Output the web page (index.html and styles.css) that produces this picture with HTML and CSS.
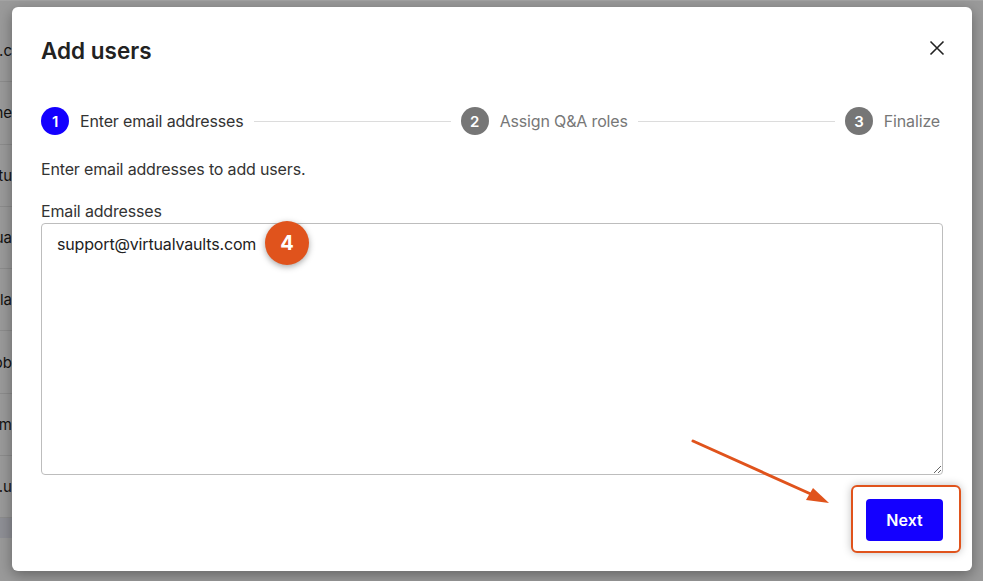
FILE: index.html
```html
<!DOCTYPE html>
<html lang="en">

<head>
    <meta charset="utf-8">
    <meta name="viewport" content="width=device-width, initial-scale=1.0">
    <title>Add users</title>
    <link rel="stylesheet" href="styles.css">
</head>

<body>
    <div id="baggrund">
        <div class="raekke"><span>.c</span></div>
        <div class="raekke"><span>ne</span></div>
        <div class="raekke"><span>tu</span></div>
        <div class="raekke"><span>ua</span></div>
        <div class="raekke"><span>la</span></div>
        <div class="raekke"><span>ob</span></div>
        <div class="raekke"><span>m</span></div>
        <div class="raekke"><span>.u</span></div>
        <div class="bund"></div>
    </div>

    <div id="modal">
        <header class="top">
            <h1>Add users</h1>
            <button class="luk" aria-label="Close">
                <svg width="16" height="16" viewBox="0 0 16 16">
                    <path d="M1.5 1.5 L14.5 14.5 M14.5 1.5 L1.5 14.5" stroke="#222" stroke-width="1.6" fill="none" />
                </svg>
            </button>
        </header>

        <nav class="trin">
            <div class="step aktiv"><span class="nr">1</span><span class="navn">Enter email addresses</span></div>
            <div class="streg"></div>
            <div class="step"><span class="nr">2</span><span class="navn">Assign Q&amp;A roles</span></div>
            <div class="streg"></div>
            <div class="step"><span class="nr">3</span><span class="navn">Finalize</span></div>
        </nav>

        <p class="intro">Enter email addresses to add users.</p>

        <label class="felt">
            <span>Email addresses</span>
            <textarea>support@virtualvaults.com</textarea>
        </label>

        <footer class="knapper">
            <div class="markering"></div>
            <button class="next">Next</button>
        </footer>

        <div class="badge">4</div>

        <svg class="pil" width="160" height="80" viewBox="0 0 160 80">
            <line x1="8" y1="8" x2="128" y2="62" stroke="#e0531c" stroke-width="3" stroke-linecap="round" />
            <polygon points="144,70 121,67 128,55" fill="#e0531c" />
        </svg>
    </div>
</body>

</html>
```

FILE: styles.css
```css
html,
body,
* {
    margin: 0;
    padding: 0;
    box-sizing: border-box;
}

body {
    width: 983px;
    height: 581px;
    overflow: hidden;
    background-color: #9a9a9a;
    font-family: Inter, "Liberation Sans", sans-serif;
    color: #333;
}

#baggrund {
    padding-top: 19px;
    border-top: 1px solid #a3a3a3;
}

.raekke {
    height: 62.3px;
    border-bottom: 1px solid #8c8c8c;
    display: flex;
    align-items: center;
    justify-content: flex-end;
    width: 12px;
    overflow: hidden;
    font-size: 15px;
    color: #111;
    white-space: nowrap;
}

.bund {
    height: 20px;
    width: 12px;
    background-color: #8e8f95;
}

#modal {
    position: absolute;
    left: 12px;
    top: 7px;
    width: 960px;
    height: 564px;
    background-color: white;
    border-radius: 6px;
    box-shadow: 0 4px 14px rgba(0, 0, 0, 0.35);
    padding: 29px 29px 30px 29px;
    display: flex;
    flex-direction: column;
    letter-spacing: -0.01em;
}

.top {
    display: flex;
    justify-content: space-between;
    align-items: center;
    height: 28px;
}

h1 {
    font-size: 22.5px;
    font-weight: 600;
    color: #222;
    line-height: 28px;
    margin-top: 2px;
    letter-spacing: 0;
}

.luk {
    background: none;
    border: none;
    width: 16px;
    height: 16px;
    margin-right: -2px;
    margin-top: -4px;
}

.trin {
    display: flex;
    align-items: center;
    margin-top: 43px;
    height: 28px;
    padding-right: 3px;
}

.step {
    display: flex;
    align-items: center;
    gap: 11px;
    color: #777;
    font-size: 16px;
}

.nr {
    width: 28px;
    height: 28px;
    border-radius: 50%;
    background-color: #767676;
    color: white;
    font-size: 15px;
    font-weight: 600;
    display: flex;
    align-items: center;
    justify-content: center;
}

.aktiv {
    color: #333;
}

.aktiv .nr {
    background-color: #1400ff;
}

.streg {
    flex: 1;
    height: 1px;
    background-color: #dcdcdc;
    margin: 0 10px;
}

.intro {
    margin-top: 22px;
    font-size: 16px;
    line-height: 24px;
}

.felt {
    margin-top: 18px;
    display: flex;
    flex-direction: column;
    font-size: 16px;
    line-height: 24px;
}

textarea {
    height: 252px;
    border: 1px solid #bdbdbd;
    border-radius: 4px;
    padding: 8px 15px;
    font-family: Inter, "Liberation Sans", sans-serif;
    font-size: 16px;
    line-height: 24px;
    letter-spacing: -0.01em;
    color: #222;
    resize: vertical;
    outline: none;
}

.knapper {
    margin-top: 24px;
    display: flex;
    justify-content: flex-end;
    position: relative;
}

.next {
    width: 77px;
    height: 42px;
    background-color: #1400ff;
    color: white;
    border: none;
    border-radius: 4px;
    font-family: Inter, "Liberation Sans", sans-serif;
    font-size: 16px;
    font-weight: 600;
    position: relative;
}

.markering {
    position: absolute;
    right: -18px;
    top: -14px;
    width: 110px;
    height: 68px;
    border: 2px solid #e0531c;
    border-radius: 6px;
    box-shadow: 0 0 8px rgba(0, 0, 0, 0.25);
    background-color: white;
}

.badge {
    position: absolute;
    left: 253px;
    top: 214px;
    width: 44px;
    height: 44px;
    border-radius: 50%;
    background-color: #e0531c;
    color: white;
    font-size: 20px;
    font-weight: 700;
    display: flex;
    align-items: center;
    justify-content: center;
    box-shadow: 0 2px 6px rgba(0, 0, 0, 0.35);
}

.pil {
    position: absolute;
    left: 673px;
    top: 426px;
}
```
